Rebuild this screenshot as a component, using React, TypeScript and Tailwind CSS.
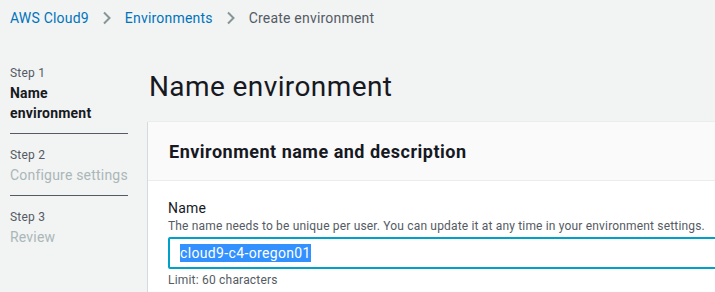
import React from 'react';

const steps = [
  { id: 1, label: "Name environment", active: true },
  { id: 2, label: "Configure settings", active: false },
  { id: 3, label: "Review", active: false },
];

function Chevron() {
  return (
    <svg className="w-[12px] h-[14px] mx-[12px]" viewBox="0 0 12 14" fill="none">
      <path d="M3 1.5l5.5 5.5L3 12.5" stroke="#879596" strokeWidth="2" />
    </svg>
  );
}

export default function App() {
  return (
    <div className="w-[715px] h-[292px] overflow-hidden bg-[#f2f3f3] text-[#16191f] tracking-[0.2px]" style={{ fontFamily: 'Roboto, "Noto Sans", sans-serif' }}>
      {/* Breadcrumbs */}
      <nav className="flex items-center h-[36px] pl-[10px] text-[14px]">
        <span className="text-[#0073bb]">AWS Cloud9</span>
        <Chevron />
        <span className="text-[#0073bb]">Environments</span>
        <Chevron />
        <span className="text-[#545b64]">Create environment</span>
      </nav>

      <div className="flex pt-[28px]">
        {/* Steps */}
        <div className="w-[147px] shrink-0 pl-[10px] pr-[19px] -mt-[1px]">
          {steps.map((step, i) => (
            <div key={step.id} className={i > 0 ? "border-t border-[#545b64] pt-[11px] mt-[10px]" : ""}>
              <div className="text-[12px] leading-[20px] text-[#545b64]">Step {step.id}</div>
              <div className={step.active ? "text-[14px] leading-[20px] font-bold text-[#16191f]" : "text-[14px] leading-[20px] text-[#aab7b8]"}>
                {step.label}
              </div>
            </div>
          ))}
        </div>

        {/* Main */}
        <div className="flex-1 min-w-0">
          <h1 className="text-[28px] leading-[36px] pl-[2px] pt-[5px] pb-[17px] tracking-[0.4px]">Name environment</h1>
          <div className="bg-white shadow-[-1px_0_0_#d5dbdb,0_-1px_0_#eaeded] ml-[1px]">
            <div className="bg-[#fafafa] border-b border-[#eaeded] h-[59px] flex items-center pl-[21px]">
              <h2 className="text-[18px] font-bold tracking-[0.5px]">Environment name and description</h2>
            </div>
            <div className="pl-[20px] pt-[18px] pb-[12px]">
              <div className="text-[14px] leading-[18px]">Name</div>
              <div className="text-[12px] leading-[18px] text-[#545b64] whitespace-nowrap tracking-[0.17px]">
                The name needs to be unique per user. You can update it at any time in your environment settings.
              </div>
              <div className="mt-[2px] h-[32px] w-[600px] border-2 border-[#00a1c9] rounded-[2px] bg-white flex items-center pl-[10px]">
                <span className="bg-[#3390ff] text-white text-[14px] leading-[18px] tracking-[0.35px]">cloud9-c4-oregon01</span>
              </div>
              <div className="mt-[3px] text-[12px] leading-[16px] text-[#545b64]">Limit: 60 characters</div>
            </div>
          </div>
        </div>
      </div>
    </div>
  );
}
